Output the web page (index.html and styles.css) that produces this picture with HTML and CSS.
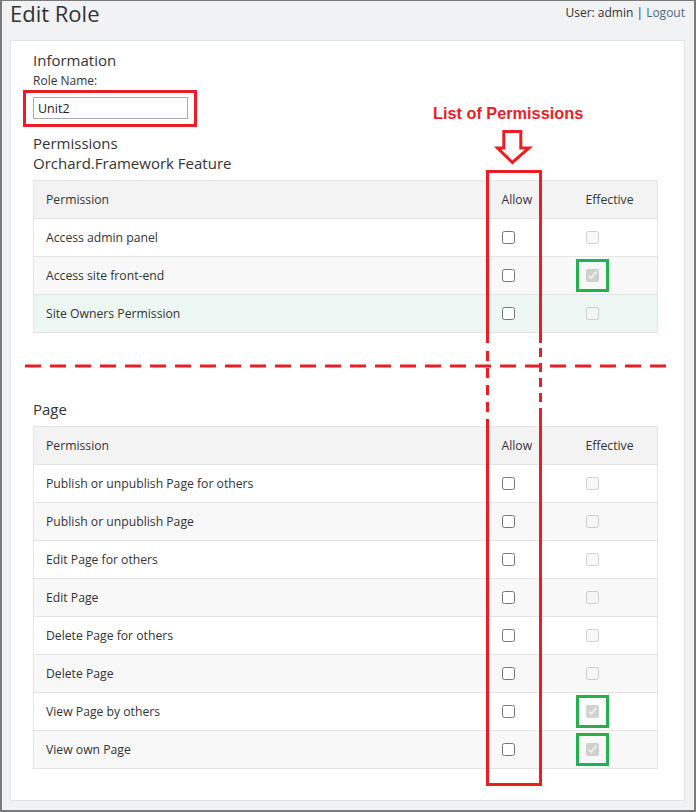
FILE: index.html
```html
<!DOCTYPE html>
<html lang="en">
<head>
<meta charset="utf-8">
<title>Edit Role</title>
<link rel="stylesheet" href="styles.css">
</head>
<body>
<div class="screen">
  <div class="frame">
    <header class="topbar">
      <h1 class="title">Edit Role</h1>
      <div class="user">User: admin | <a class="logout" href="#">Logout</a></div>
    </header>
    <main class="card">
      <h2 class="section-title">Information</h2>
      <label class="field-label" for="role-name">Role Name:</label>
      <div class="name-field">
        <input id="role-name" class="text-input" type="text" value="Unit2">
        <span class="mark-red"></span>
      </div>
      <h2 class="section-title perm-title">Permissions</h2>
      <h3 class="section-title">Orchard.Framework Feature</h3>
      <table class="perm-table">
        <thead>
          <tr><th class="c-name">Permission</th><th class="c-allow">Allow</th><th class="c-eff">Effective</th></tr>
        </thead>
        <tbody>
          <tr><td>Access admin panel</td><td><input type="checkbox" class="cb"></td><td><input type="checkbox" class="cb" disabled></td></tr>
          <tr><td>Access site front-end</td><td><input type="checkbox" class="cb"></td><td><input type="checkbox" class="cb mark-green" disabled checked></td></tr>
          <tr class="row-hover"><td>Site Owners Permission</td><td><input type="checkbox" class="cb"></td><td><input type="checkbox" class="cb" disabled></td></tr>
        </tbody>
      </table>
      <h3 class="section-title page-title">Page</h3>
      <table class="perm-table">
        <thead>
          <tr><th class="c-name">Permission</th><th class="c-allow">Allow</th><th class="c-eff">Effective</th></tr>
        </thead>
        <tbody>
          <tr><td>Publish or unpublish Page for others</td><td><input type="checkbox" class="cb"></td><td><input type="checkbox" class="cb" disabled></td></tr>
          <tr><td>Publish or unpublish Page</td><td><input type="checkbox" class="cb"></td><td><input type="checkbox" class="cb" disabled></td></tr>
          <tr><td>Edit Page for others</td><td><input type="checkbox" class="cb"></td><td><input type="checkbox" class="cb" disabled></td></tr>
          <tr><td>Edit Page</td><td><input type="checkbox" class="cb"></td><td><input type="checkbox" class="cb" disabled></td></tr>
          <tr><td>Delete Page for others</td><td><input type="checkbox" class="cb"></td><td><input type="checkbox" class="cb" disabled></td></tr>
          <tr><td>Delete Page</td><td><input type="checkbox" class="cb"></td><td><input type="checkbox" class="cb" disabled></td></tr>
          <tr><td>View Page by others</td><td><input type="checkbox" class="cb"></td><td><input type="checkbox" class="cb mark-green" disabled checked></td></tr>
          <tr><td>View own Page</td><td><input type="checkbox" class="cb"></td><td><input type="checkbox" class="cb mark-green" disabled checked></td></tr>
        </tbody>
      </table>
    </main>
  </div>

  <svg class="annot" width="696" height="812" viewBox="0 0 696 812" aria-hidden="true">
    <g fill="none" stroke="#ed1c24" stroke-width="3">
      <path d="M486 171.5 H542"/>
      <path d="M486 784.5 H542"/>
      <path d="M487.5 170 V343"/>
      <path d="M487.5 351 V425" stroke-dasharray="10 7"/>
      <path d="M487.5 425 V786"/>
      <path d="M540.5 170 V343"/>
      <path d="M540.5 348 V416" stroke-dasharray="9 6"/>
      <path d="M540.5 416 V786"/>
      <path d="M25 366 H670" stroke-dasharray="16 9"/>
      <path d="M503.8 131.5 H520.8 V148 H529 L512.4 162.5 L497.5 148 H503.8 Z" stroke-linejoin="miter"/>
    </g>
  </svg>
  <div class="annot-label">List of Permissions</div>
</div>
</body>
</html>
```

FILE: styles.css
```css
* { box-sizing: border-box; }

html, body {
  margin: 0;
  padding: 0;
  background: #ffffff;
}

.screen {
  position: relative;
  width: 696px;
  height: 812px;
  overflow: hidden;
  font-family: "Open Sans", "Noto Sans", "Liberation Sans", sans-serif;
  color: #333333;
}

.frame {
  width: 696px;
  height: 812px;
  background: #f1f2f4;
  border-style: solid;
  border-color: #7a7a7a;
  border-width: 1px 2px 2px 2px;
  padding: 0 9px 0 8px;
}

.topbar {
  display: flex;
  justify-content: space-between;
  align-items: flex-start;
}

.title {
  margin: 0;
  font-size: 22px;
  line-height: 24px;
  font-weight: 400;
  color: #333333;
}

.user {
  padding-top: 3px;
  font-size: 12px;
  line-height: 18px;
  color: #333333;
}

.logout {
  color: #4d6a88;
  text-decoration: none;
}

.card {
  margin-top: 15px;
  width: 675px;
  background: #ffffff;
  border: 1px solid #e2e3e5;
  padding: 9px 26px 31px 22px;
}

.section-title {
  margin: 0;
  font-size: 15px;
  line-height: 20px;
  font-weight: 400;
  color: #333333;
}

.field-label {
  display: block;
  margin-top: 3px;
  font-size: 12px;
  line-height: 16px;
}

.name-field {
  position: relative;
  display: inline-block;
  margin-top: 8px;
  vertical-align: top;
}

.text-input {
  display: block;
  width: 155px;
  height: 22px;
  margin: 0;
  padding: 0 4px;
  border: 1px solid #a9a9a9;
  font-family: inherit;
  font-size: 12.5px;
  color: #222222;
  background: #ffffff;
}

.mark-red {
  position: absolute;
  top: -7px;
  left: -10px;
  right: -9px;
  bottom: -8px;
  border: 3px solid #ed1c24;
}

.perm-title {
  margin-top: 14px;
}

.page-title {
  margin-top: 66px;
}

.perm-table {
  margin-top: 7px;
  width: 625px;
  border-collapse: collapse;
  border: 1px solid #e4e4e4;
  font-size: 12.2px;
  table-layout: fixed;
}

.perm-table th,
.perm-table td {
  height: 38px;
  padding: 0 12px;
  text-align: left;
  vertical-align: middle;
  font-weight: 400;
  line-height: 18px;
  border-top: 1px solid #e4e4e4;
}

.perm-table th {
  background: #f3f3f3;
}

.perm-table .c-allow,
.perm-table tbody td:nth-child(2) { padding-left: 13px; }
.perm-table .c-eff,
.perm-table tbody td:nth-child(3) { padding-left: 13px; }

.c-allow { width: 84px; }
.c-eff { width: 85px; }

.perm-table tbody tr:nth-child(odd) { background: #ffffff; }
.perm-table tbody tr:nth-child(even) { background: #f8f8f8; }
.perm-table tbody tr.row-hover { background: #ecf7f3; }

.cb {
  display: block;
  width: 13px;
  height: 13px;
  margin: 0;
}

.mark-green {
  outline: 3px solid #22b14c;
  outline-offset: 7px;
}

.annot {
  position: absolute;
  top: 0;
  left: 0;
  pointer-events: none;
}

.annot-label {
  position: absolute;
  top: 105px;
  left: 433px;
  font-family: "Liberation Sans", Arial, sans-serif;
  font-weight: 700;
  font-size: 16.3px;
  line-height: 16px;
  color: #ed1c24;
  white-space: nowrap;
}
```
